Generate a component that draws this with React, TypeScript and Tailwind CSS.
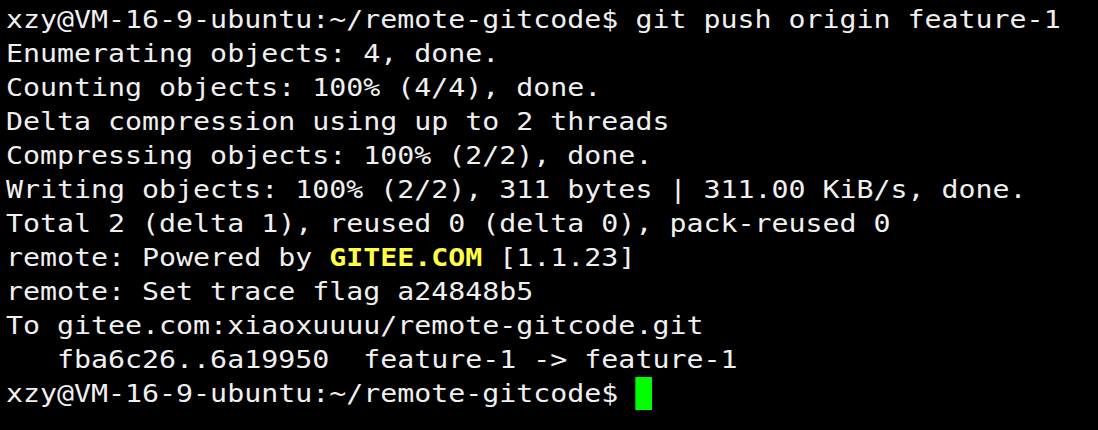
const lines = [
  "xzy@VM-16-9-ubuntu:~/remote-gitcode$ git push origin feature-1",
  "Enumerating objects: 4, done.",
  "Counting objects: 100% (4/4), done.",
  "Delta compression using up to 2 threads",
  "Compressing objects: 100% (2/2), done.",
  "Writing objects: 100% (2/2), 311 bytes | 311.00 KiB/s, done.",
  "Total 2 (delta 1), reused 0 (delta 0), pack-reused 0",
];

const tail = [
  "remote: Set trace flag a24848b5",
  "To gitee.com:xiaoxuuuu/remote-gitcode.git",
  "   fba6c26..6a19950  feature-1 -> feature-1",
];

export default function App() {
  return (
    <div className="w-[1098px] h-[430px] bg-black overflow-hidden pl-[6px] pt-[2px]">
      <div
        className="origin-top-left scale-x-[1.108] text-[25.5px] leading-[34px] text-[#f0f0f0] whitespace-pre"
        style={{ fontFamily: '"DejaVu Sans Mono", monospace' }}
      >
        {lines.map((l, i) => (
          <div key={i}>{l}</div>
        ))}
        <div>
          remote: Powered by <span className="font-bold text-[#ffff45]">GITEE.COM</span> [1.1.23]
        </div>
        {tail.map((l, i) => (
          <div key={i}>{l}</div>
        ))}
        <div>
          xzy@VM-16-9-ubuntu:~/remote-gitcode$ <span className="inline-block w-[1ch] h-[33px] align-top mt-[1px] bg-[#00ff00]" />
        </div>
      </div>
    </div>
  );
}
